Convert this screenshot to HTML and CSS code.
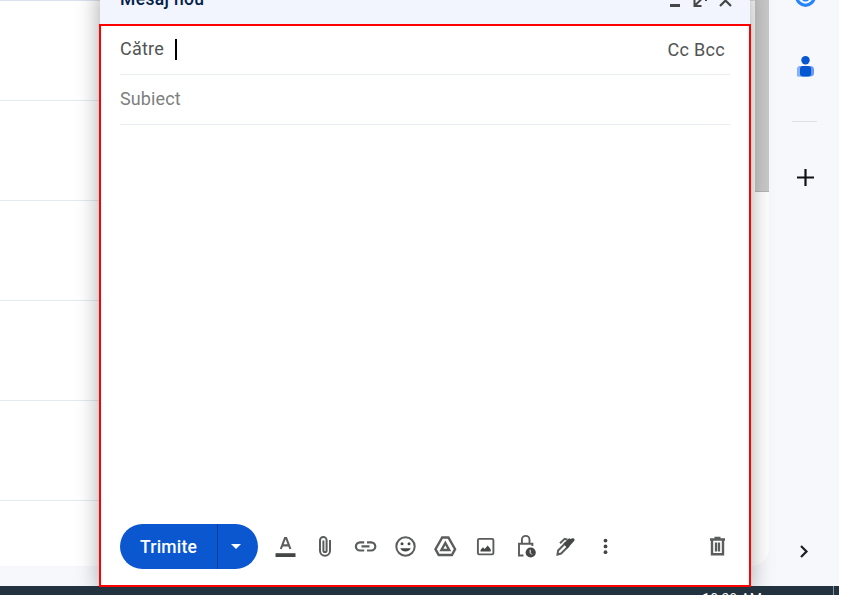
FILE: index.html
```html
<!DOCTYPE html>
<html lang="ro">
<head>
<meta charset="utf-8">
<title>Mesaj nou</title>
<link rel="stylesheet" href="styles.css">
</head>
<body>
<div class="screen">
  <main class="workspace">
    <section class="mail">
      <div class="rows"><div class="row"></div><div class="row"></div><div class="row"></div><div class="row"></div><div class="row"></div></div>
      <div class="scrollbar"></div>
    </section>
    <aside class="rail">
      <svg class="tasks" width="22" height="22" viewBox="0 0 22 22"><circle cx="10.500" cy="11.500" r="8.8" fill="none" stroke="#2684fc" stroke-width="3.2"/><circle cx="10.500" cy="12.500" r="4" fill="#2684fc"/><path d="M9 12.800l1.400 1.400 2-2.500" fill="none" stroke="#fff" stroke-width="1.500"/></svg>
      <svg class="contacts" width="18" height="22" viewBox="0.500 0.500 18 22"><rect x=".5" y="10.5" width="17" height="10.5" rx="3.8" fill="#6a96fa"/><path d="M.5 21v-6.500q0-4 4-4V21z" fill="#8ab0ff"/><rect x="3.500" y="10.500" width="11" height="10.500" rx="3" fill="#0457d0"/><circle cx="9" cy="4.800" r="4.200" fill="#0457d0"/></svg>
      <div class="rail-line"></div>
      <svg class="plus" width="18" height="18" viewBox="0 0 18 18"><path d="M8.500 0v17M0 8.500h17" stroke="#111" stroke-width="2.200"/></svg>
      <svg class="chevron" width="10" height="14" viewBox="0 0 10 14"><path d="M2 1L7.500 6.500 2 12" fill="none" stroke="#1f1f1f" stroke-width="2.200"/></svg>
    </aside>
  </main>
  <footer class="taskbar"><span class="clock">10:38 AM</span><span class="desktop-edge"></span></footer>

  <div class="compose">
    <header class="compose-head">
      <span class="title">Mesaj nou</span>
      <svg width="64" height="20" viewBox="0 0 64 20" fill="none" stroke="#444746" stroke-width="2.200"><path d="M1 17.500h10" stroke-width="3"/><path d="M25.500 11v7h7M26 17.500l5-5M31 12.500l5-5M30 7h7v6" stroke-width="2"/><path d="M51 7l11 11M62 7L51 18"/></svg>
    </header>
    <div class="compose-body">
      <div class="field to"><span class="label">Către</span><span class="caret"></span><span class="copies">Cc Bcc</span></div>
      <div class="field subject"><span class="label">Subiect</span></div>
      <div class="message"></div>
      <div class="toolbar">
        <div class="send"><span class="send-label">Trimite</span><span class="send-more"><i></i></span></div>
        <div class="tools">
          <svg viewBox="0 0 24 24"><path d="M2.500 19.200h20v3.800h-20z" class="solid"/><path d="M7.800 15L12 4h1.200L17.400 15M9.300 11.400h6.600" stroke-width="2.100"/></svg>
          <svg viewBox="0 0 24 24"><path d="M17 6v10.800a5 5 0 0 1-10 0V6.200a3.300 3.300 0 0 1 6.600 0v10.300a1.600 1.600 0 0 1-3.200 0V6.500" stroke-width="2"/></svg>
          <svg viewBox="0 0 24 24"><path d="M11.200 8.300H7a4 4 0 0 0 0 8.200h4.200M14 8.300h4.200a4 4 0 0 1 0 8.200H14M8.500 12.400h8" stroke-width="2.200"/></svg>
          <svg viewBox="0 0 24 24"><circle cx="12.500" cy="12.500" r="9.200"/><circle cx="9" cy="9.800" r="1.500" class="solid"/><circle cx="16" cy="9.800" r="1.500" class="solid"/><path class="solid" d="M7.300 14.200h10.400c-1.700 4.400-8.700 4.400-10.400 0z"/></svg>
          <svg viewBox="0 0 24 24"><path d="M9.200 3.500h6.200l6.700 11.700-3.200 5.800H5.700l-3.200-5.800zM12.300 9l-3.900 7h7.800z" stroke-width="2.400"/></svg>
          <svg viewBox="0 0 24 24"><rect x="4.900" y="4.900" width="15.500" height="15.500" rx="1.300" stroke-width="1.900"/><path class="solid" d="M7.500 17.500v-1.600l2.500-2.600 1.700 1.700 3-3.400 3 3.700v2.200z"/></svg>
          <svg viewBox="0 0 24 24"><path d="M10.500 21.500H6V9.800h13.400v2.300M8.900 9.500V5.700a3.800 3.800 0 0 1 7.600 0v3.800" stroke-width="1.900"/><circle cx="17.700" cy="18.500" r="5.100" class="solid"/><path d="M17.200 15.800v3l1.700 1.700" stroke="#fff" stroke-width="1"/></svg>
          <svg viewBox="0 0 24 24"><path d="M4.500 20.500l.6-4 7-7 3 3-7 7zM7 9.300l4.700-4.500 2.800 1" stroke-width="2"/><path class="solid" d="M10.500 9.500l5.600-5.300 1.600.9c1.500-1.600 3.900-1 3.900.7 0 1-1.200 2-1.200 2l-6 6.700z"/></svg>
          <svg viewBox="0 0 24 24"><circle cx="12.500" cy="6.600" r="1.900" class="solid"/><circle cx="12.500" cy="12.400" r="1.900" class="solid"/><circle cx="12.500" cy="18.200" r="1.900" class="solid"/></svg>
        </div>
        <svg class="trash" viewBox="0 0 24 24"><path d="M5 5.500h15M9.500 4h6M7 6v14.300h11V6" stroke-width="2.400"/><path d="M11 8.500v9M14 8.500v9" stroke-width="2.300"/></svg>
      </div>
    </div>
  </div>
</div>
</body>
</html>
```

FILE: styles.css
```css
* { box-sizing: border-box; }
body { margin: 0; background: #fff; font-family: Roboto, "Liberation Sans", sans-serif; }
svg { display: block; flex: none; }
.screen { position: relative; width: 839px; height: 595px; overflow: hidden; display: flex; flex-direction: column; }
.workspace { height: 586px; display: flex; background: #f6f8fc; }
.mail { width: 769px; height: 566px; display: flex; background: #fff; border-radius: 0 0 18px 0; overflow: hidden; }
.rows { flex: 1; padding-right: 10px; border-top: 1px solid #d9e3ef; }
.row { height: 100px; border-bottom: 1px solid #e4ebee; }
.scrollbar { width: 14px; height: 192px; background: #c9c9c9; border-bottom: 1px solid #b5b5b5; }
.rail { position: relative; z-index: 2; width: 70px; height: 586px; display: flex; flex-direction: column; align-items: center; }
.rail > svg.tasks { margin: -15px 0 0 4px; }
.rail > svg.contacts { margin: 49px 0 0 4px; }
.rail-line { width: 25px; height: 1px; margin: 43px 0 0 1px; background: #dddfe3; }
.rail > svg.plus { margin: 47px 0 0 4px; }
.rail > svg.chevron { margin: 358px 0 0 0; }
.taskbar { position: relative; z-index: 2; height: 9px; overflow: hidden; display: flex; justify-content: flex-end; background: #22323e; }
.clock { margin: 6px 71px 0 0; color: #fff; font-size: 14px; line-height: 15px; }
.desktop-edge { width: 6px; height: 9px; border-left: 1px solid #84909a; }
.compose { position: absolute; z-index: 3; left: 99px; top: -16px; width: 652px; height: 603px; }
.compose::before { content: ""; position: absolute; z-index: -1; inset: 0 1px 1px; box-shadow: 0 5px 22px rgba(0,0,0,.36); clip-path: inset(0 -30px 0 -30px); }
.compose-head { height: 40px; margin: 0 1px; padding: 4px 17px 0 20px; background: #f2f5fd; display: flex; justify-content: space-between; align-items: flex-start; }
.title { color: #041e49; font-size: 17.5px; line-height: 22px; font-weight: 500; letter-spacing: .35px; }
.compose-body { height: 563px; padding: 0 19px 16px; border: 2px solid #f00; background: #fff; display: flex; flex-direction: column; }
.field { height: 50px; flex: none; display: flex; align-items: center; border-bottom: 1px solid #e9edef; font-size: 18px; letter-spacing: .2px; }
.label { margin-top: -3px; }
.to { height: 49px; color: #515453; }
.subject { color: #7d807f; }
.subject .label { letter-spacing: .1px; margin-top: -2px; }
.caret { width: 2px; height: 21px; margin: -2px 0 0 11px; background: #000; }
.copies { margin: -1px 5px 0 auto; letter-spacing: .3px; }
.message { flex: 1; }
.toolbar { height: 45px; display: flex; align-items: center; }
.send { width: 138px; height: 45px; display: flex; border-radius: 23px; overflow: hidden; color: #fff; background: #0b57d0; }
.send-label { width: 98px; display: flex; align-items: center; justify-content: center; font-size: 17.5px; font-weight: 500; letter-spacing: .2px; border-right: 1px solid #083c91; }
.send-more { width: 40px; display: flex; align-items: center; justify-content: center; padding-right: 4px; }
.send-more i { border: 5px solid transparent; border-top-color: #fff; border-bottom: 0; }
.tools { display: flex; gap: 16px; margin: -2px 0 0 15px; }
.tools svg, .trash { width: 24px; height: 24px; fill: none; stroke: #5a5d5c; stroke-width: 2; }
.tools .solid { fill: #444746; stroke: none; }
.trash { margin: -2px 1px 0 auto; }
```
